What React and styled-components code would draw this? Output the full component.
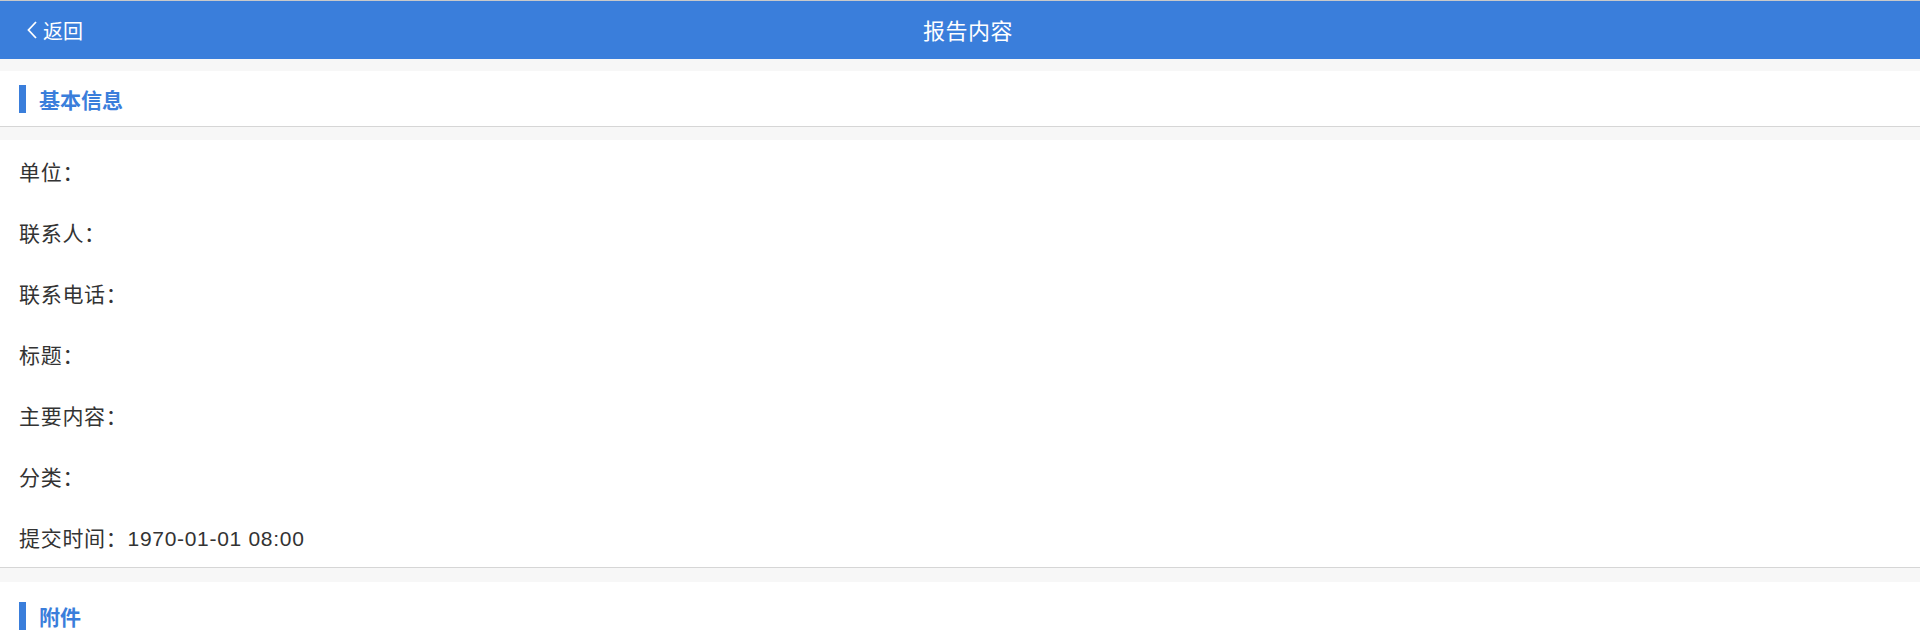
import React from "react";
import styled, { createGlobalStyle } from "styled-components";

const Global = createGlobalStyle`
  html, body { margin: 0; padding: 0; background: #f7f7f7; }
  body { font-family: "Liberation Sans", "Noto Sans CJK SC", sans-serif; color: #333; }
`;

const Page = styled.div`
  border-top: 1px solid #c9c9c9;
  background: #f7f7f7;
  min-height: 632px;
`;

const Header = styled.header`
  position: relative;
  height: 58px;
  background: #3a7edb;
  display: flex;
  align-items: center;
  justify-content: center;
  color: #fff;
`;

const Back = styled.div`
  position: absolute;
  left: 26px;
  top: 0;
  bottom: 0;
  display: flex;
  align-items: center;
  gap: 5px;
  font-size: 20px;
`;

const Title = styled.h1`
  margin: 0 0 3px 16px;
  font-size: 22px;
  letter-spacing: 0.5px;
  font-weight: 400;
`;

const Section = styled.section`
  margin-top: ${(p) => p.$gap}px;
  padding-top: ${(p) => p.$pad || 0}px;
  background: #fff;
`;

const SectionHead = styled.div`
  height: 55px;
  display: flex;
  align-items: center;
  gap: 13px;
  padding-left: 19px;
  border-bottom: ${(p) => (p.$border ? "1px solid #d6d6d6" : "none")};
`;

const Bar = styled.span`
  width: 7px;
  height: 28px;
  background: #3a7edb;
`;

const SectionTitle = styled.h2`
  margin: 0;
  font-size: 21px;
  font-weight: 700;
  color: #3a7edb;
`;

const List = styled.div`
  margin-top: 13px;
  background: #fff;
  border-bottom: 1px solid #d6d6d6;
`;

const Row = styled.div`
  height: 61px;
  display: flex;
  align-items: center;
  padding-left: 19px;
  font-size: 21px;
  letter-spacing: 0.7px;
  color: #333;
`;

const rows = [
  ["单位：", ""],
  ["联系人：", ""],
  ["联系电话：", ""],
  ["标题：", ""],
  ["主要内容：", ""],
  ["分类：", ""],
  ["提交时间：", "1970-01-01 08:00"],
];

export default function App() {
  return (
    <>
      <Global />
      <Page>
        <Header>
          <Back>
            <svg width="12" height="20" viewBox="0 0 12 20" fill="none">
              <path d="M10 2 L2.5 10 L10 18" stroke="#fff" strokeWidth="1.8" />
            </svg>
            <span>返回</span>
          </Back>
          <Title>报告内容</Title>
        </Header>
        <Section $gap={12}>
          <SectionHead $border>
            <Bar />
            <SectionTitle>基本信息</SectionTitle>
          </SectionHead>
        </Section>
        <List>
          {rows.map(([k, v]) => (
            <Row key={k}>
              {k}
              {v}
            </Row>
          ))}
        </List>
        <Section $gap={14} $pad={6}>
          <SectionHead>
            <Bar />
            <SectionTitle>附件</SectionTitle>
          </SectionHead>
        </Section>
      </Page>
    </>
  );
}
